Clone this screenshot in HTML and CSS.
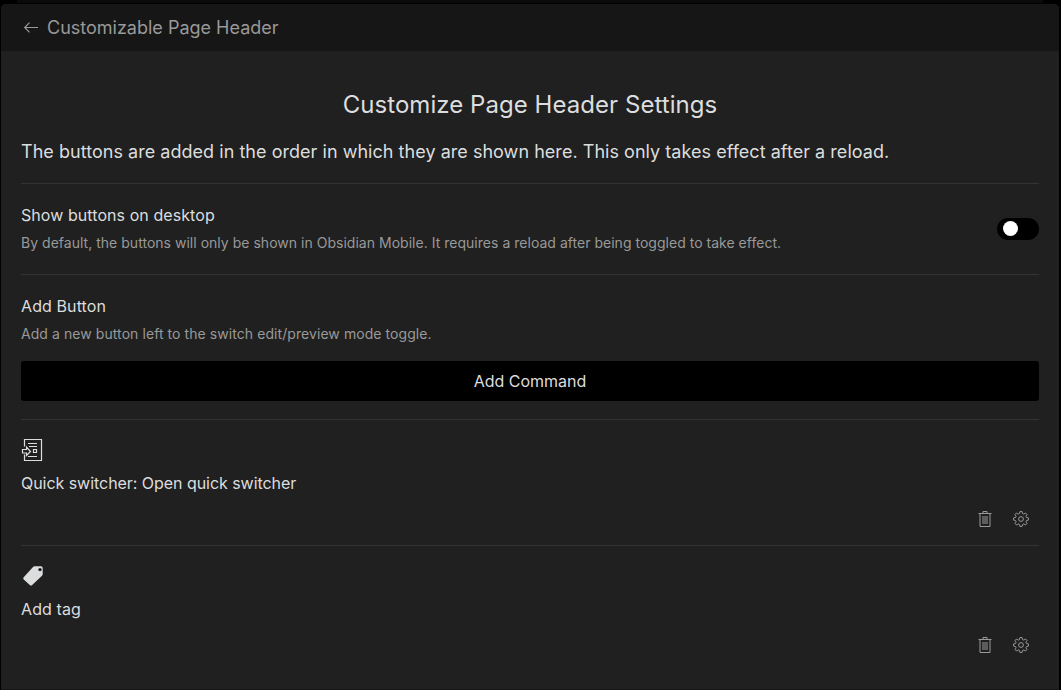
FILE: index.html
```html
<!DOCTYPE html>
<html lang="en">
<head>
<meta charset="utf-8">
<title>Customizable Page Header</title>
<link rel="stylesheet" href="styles.css">
</head>
<body>
<svg width="0" height="0" class="defs">
  <symbol id="trash" viewBox="0 0 16 16"><path d="M1.500 2.500h13M6 2.500v-2h4v2M3 3v12.500h10V3M6 5v8M8 5v8M10 5v8"/></symbol>
  <symbol id="gear" viewBox="0 0 16 16"><path d="M6.900.6h2.200l.5 2 1.200.5 1.700-1.100 1.500 1.500-1.100 1.700.5 1.200 2 .5v2.200l-2 .5-.5 1.200 1.100 1.700-1.500 1.500-1.700-1.100-1.200.5-.5 2H6.900l-.5-2-1.200-.5-1.700 1.100L2 12.500l1.100-1.700-.5-1.200-2-.5V6.900l2-.5.5-1.200L2 3.500 3.500 2l1.700 1.100 1.200-.5z"/><circle cx="8" cy="8" r="2.400"/></symbol>
</svg>
<main class="modal">
  <header class="topbar">
    <svg class="back" viewBox="0 0 16 16"><path d="M15 7.500H2M6.500 2.700 1.700 7.500l4.800 4.800"/></svg>
    <span>Customizable Page Header</span>
  </header>
  <section class="content">
    <h1>Customize Page Header Settings</h1>
    <p class="intro">The buttons are added in the order in which they are shown here. This only takes effect after a reload.</p>
    <div class="row toggle-row">
      <div>
        <div class="name toggle-name">Show buttons on desktop</div>
        <div class="desc">By default, the buttons will only be shown in Obsidian Mobile. It requires a reload after being toggled to take effect.</div>
      </div>
      <div class="toggle"><span class="knob"></span></div>
    </div>
    <div class="row add-row">
      <div class="name add-name">Add Button</div>
      <div class="desc add-desc">Add a new button left to the switch edit/preview mode toggle.</div>
      <button class="command">Add Command</button>
    </div>
    <div class="row item">
      <svg class="icon switcher" viewBox="0 0 24 24"><path d="M3.500 8.500v-7h17v21h-17v-6M7 5.500h9M8 8.500h8M7 18.500h9M1.500 11.500h4V9l4 4.500-4 4V15h-4zM12.500 11.500h3v3h-3z"/></svg>
      <div class="name quick-name">Quick switcher: Open quick switcher</div>
      <div class="actions">
        <svg><use href="#trash"/></svg>
        <svg><use href="#gear"/></svg>
      </div>
    </div>
    <div class="row item">
      <svg class="icon" viewBox="0 0 24 24"><path class="tag" d="M2.700 13.300 11.800 3.200q.8-.9 2-.9H20q1.700 0 1.700 1.700v6q0 1-.7 1.700L11.200 21q-1.200 1.200-2.400 0l-6.100-5.600q-1.100-1.100 0-2.100z"/><circle class="hole" cx="19" cy="5.600" r="1.700"/></svg>
      <div class="name tag-name">Add tag</div>
      <div class="actions">
        <svg><use href="#trash"/></svg>
        <svg><use href="#gear"/></svg>
      </div>
    </div>
  </section>
</main>
</body>
</html>
```

FILE: styles.css
```css
* { box-sizing: border-box; }
body { margin: 0; height: 690px; overflow: hidden; background: linear-gradient(90deg, #000 17px, #0a0a0a 17px, #0a0a0a 1043px, #000 1043px) 0 0 / 100% 3px no-repeat #000; color: #dcddde; font-family: Inter, sans-serif; padding: 4px 2px 0 1px; }
.defs { position: absolute; }
.modal { height: 686px; background: #202020; border-radius: 5px 5px 0 0; border-bottom: 1px solid #191519; overflow: hidden; }
.topbar { height: 47px; background: #161616; color: #999; display: flex; align-items: center; padding-left: 22px; gap: 8px; font-size: 18px; }
svg { fill: none; stroke: currentColor; display: block; }
.back { width: 16px; height: 16px; stroke-width: 1.2; }
.content { padding: 0 20px; }
h1 { margin: 0; padding-top: 39px; font-size: 24px; line-height: 30px; font-weight: 400; text-align: center; letter-spacing: .05px; }
.intro { margin: 18px 0 17px; font-size: 18px; line-height: 28px; letter-spacing: .035px; }
.row { border-top: 1px solid #333; }
.name { font-size: 16px; line-height: 24px; }
.toggle-name { letter-spacing: .07px; }
.add-name { letter-spacing: .1px; }
.quick-name { letter-spacing: -.045px; }
.tag-name { letter-spacing: .1px; }
.desc { font-size: 14px; line-height: 20px; color: #999; margin-top: 6px; letter-spacing: .022px; }
.add-desc { letter-spacing: .07px; }
.toggle-row { height: 91px; display: flex; align-items: center; justify-content: space-between; }
.toggle-row > div:first-child { padding-bottom: 3px; }
.toggle { width: 42px; height: 22px; border-radius: 11px; background: #000; padding: 3px 6px; }
.knob { display: block; width: 15px; height: 15px; border-radius: 50%; background: #fff; }
.add-row { height: 145px; padding-top: 19px; }
.command { display: block; width: 100%; height: 40px; margin-top: 17px; border: 0; border-radius: 3px; background: #000; color: #dcddde; font: 16px Inter, sans-serif; }
.item { height: 126px; padding-top: 18px; }
.icon { width: 24px; height: 24px; margin-bottom: 9px; }
.switcher { stroke-width: 1.2; }
.tag { fill: currentColor; stroke: none; }
.hole { fill: #202020; stroke: none; }
.actions { display: flex; justify-content: flex-end; gap: 20px; padding-right: 10px; margin-top: 16px; color: #999; }
.actions svg { width: 16px; height: 16px; }
```
